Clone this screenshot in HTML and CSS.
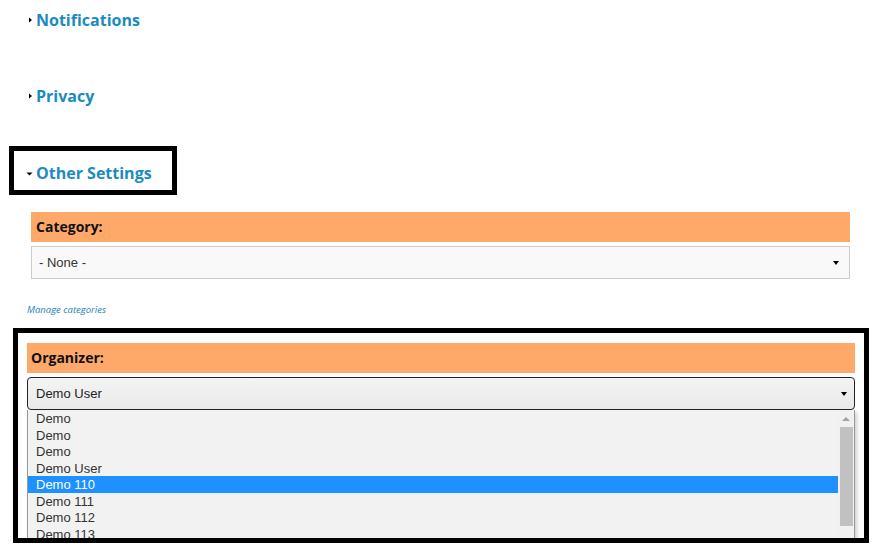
FILE: index.html
```html
<!DOCTYPE html>
<html lang="en">
<head>
    <meta charset="UTF-8">
    <meta name="viewport" content="width=device-width, initial-scale=1.0">
    <title>Event Settings</title>
    <link rel="stylesheet" href="styles.css">
</head>
<body>
    <div class="toggle">
        <span class="arrow"><svg width="10" height="8" viewBox="0 0 10 8"><path d="M3 1.5 L6 4 L3 6.5 Z" fill="#000"/></svg></span>
        Notifications
    </div>
    <div class="toggle privacy">
        <span class="arrow"><svg width="10" height="8" viewBox="0 0 10 8"><path d="M3 1.5 L6 4 L3 6.5 Z" fill="#000"/></svg></span>
        Privacy
    </div>
    <div class="toggle open">
        <span class="arrow"><svg width="10" height="8" viewBox="0 0 10 8"><path d="M0.5 2.5 L6.5 2.5 L3.5 5.5 Z" fill="#000"/></svg></span>
        Other Settings
    </div>

    <div class="field category">
        <div class="label">Category:</div>
        <div class="select">- None -<span class="caret"></span></div>
    </div>
    <div class="manage"><a href="#">Manage categories</a></div>

    <div class="field organizer">
        <div class="label">Organizer:</div>
        <div class="select focus">Demo User<span class="caret"></span></div>
        <div class="listbox">
            <ul>
                <li>Demo</li>
                <li>Demo</li>
                <li>Demo</li>
                <li>Demo User</li>
                <li class="selected">Demo 110</li>
                <li>Demo 111</li>
                <li>Demo 112</li>
                <li>Demo 113</li>
            </ul>
            <div class="scrollbar">
                <span class="up"></span>
                <span class="thumb"></span>
            </div>
        </div>
    </div>
</body>
</html>
```

FILE: styles.css
```css
body {
    margin: 0;
    font-family: "Open Sans", "Liberation Sans", sans-serif;
    background-color: #ffffff;
    color: #222;
}
.toggle {
    display: flex;
    align-items: center;
    height: 40px;
    padding-left: 26px;
    font-size: 16px;
    font-weight: bold;
    color: #1c8bc0;
}
.toggle .arrow {
    display: flex;
    width: 10px;
}
.privacy {
    margin-top: 36px;
}
.open {
    width: 146px;
    height: 35px;
    margin-top: 30px;
    margin-left: 9px;
    padding-top: 4px;
    padding-left: 12px;
    border: 5px solid #000;
}
.open .arrow {
    margin-top: 2px;
}
.field .label {
    height: 30px;
    line-height: 30px;
    background-color: #fea96a;
    font-size: 14px;
    font-weight: bold;
    color: #111;
}
.select {
    position: relative;
    box-sizing: border-box;
    height: 33px;
    line-height: 31px;
    margin-top: 4px;
    font-family: "Liberation Sans", Arial, sans-serif;
    font-size: 13px;
    color: #333;
}
.caret {
    position: absolute;
    top: 14px;
    right: 10px;
    border-left: 3px solid transparent;
    border-right: 3px solid transparent;
    border-top: 4px solid #000;
}
.category {
    margin: 17px 32px 0 31px;
}
.category .label {
    padding-left: 5px;
}
.category .select {
    padding-left: 7px;
    border: 1px solid #ccc;
    background-color: #f9f9f9;
}
.manage {
    margin-top: 25px;
    padding-left: 27px;
    line-height: 12px;
    font-size: 9.5px;
    font-style: italic;
}
.manage a {
    color: #1c84b8;
    text-decoration: none;
}
.organizer {
    box-sizing: border-box;
    height: 215px;
    margin: 12px 13px 0 13px;
    padding: 10px 9px 0 9px;
    border: 5px solid #000;
    overflow: hidden;
}
.organizer .label {
    padding-left: 4px;
}
.organizer .select {
    padding-left: 8px;
    border: 1.5px solid #222;
    border-radius: 4px;
    background: linear-gradient(#f4f4f4, #e9e9e9);
    color: #222;
}
.organizer .caret {
    right: 7px;
}
.listbox {
    display: flex;
    border-left: 1px solid #999;
    border-right: 1px solid #999;
    background-color: #f2f2f2;
    box-shadow: 2px 2px 4px rgba(0, 0, 0, 0.2);
    font-family: "Liberation Sans", Arial, sans-serif;
    font-size: 13px;
    color: #333;
}
.listbox ul {
    flex: 1;
    margin: 0;
    padding: 0;
    list-style: none;
}
.listbox li {
    height: 16.5px;
    line-height: 17px;
    padding-left: 8px;
}
.listbox li.selected {
    background-color: #1e90ff;
    color: #fff;
}
.scrollbar {
    display: flex;
    flex-direction: column;
    align-items: center;
    width: 16px;
    background-color: #f1f1f1;
}
.scrollbar .up {
    margin-top: 7px;
    border-left: 4px solid transparent;
    border-right: 4px solid transparent;
    border-bottom: 4px solid #a3a3a3;
}
.scrollbar .thumb {
    width: 13px;
    height: 99px;
    margin-top: 6px;
    background-color: #c1c1c1;
}
```
